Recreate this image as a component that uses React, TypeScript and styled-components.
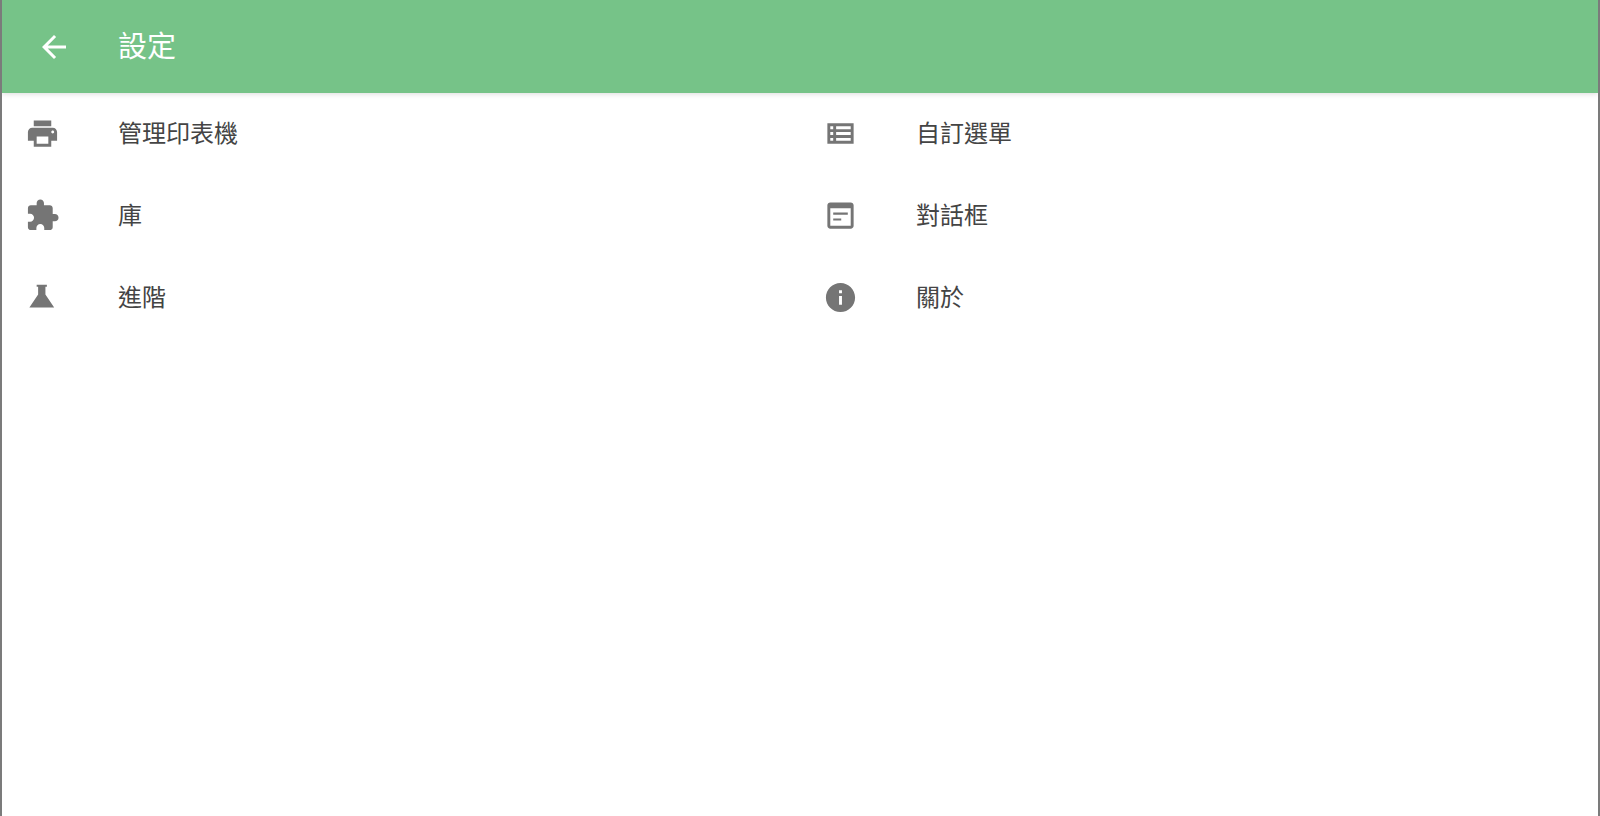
import styled, { createGlobalStyle } from "styled-components";

const GlobalStyle = createGlobalStyle`
  html, body {
    margin: 0;
    padding: 0;
    height: 100%;
    background: #ffffff;
  }
  #root {
    height: 100%;
  }
`;

const Screen = styled.div`
  box-sizing: border-box;
  width: 1600px;
  height: 816px;
  overflow: hidden;
  border-left: 2px solid #7b7b7b;
  border-right: 2px solid #7b7b7b;
  background: #ffffff;
  font-family: "Noto Sans CJK TC", "Noto Sans", sans-serif;
`;

const Toolbar = styled.header`
  display: flex;
  align-items: center;
  height: 93px;
  background: #76c388;
  box-shadow: 0 1px 5px rgba(0, 0, 0, 0.14);
  color: #ffffff;
`;

const BackIcon = styled.svg`
  width: 36px;
  height: 36px;
  margin-left: 34px;
  fill: #ffffff;
`;

const Title = styled.h1`
  margin: 0 0 4px 46px;
  font-size: 29px;
  font-weight: 400;
  line-height: 1;
`;

const Menu = styled.div`
  display: grid;
  grid-template-columns: 1fr 1fr;
  grid-auto-rows: 82px;
`;

const Row = styled.div`
  display: flex;
  align-items: center;
  padding-left: 23px;
`;

const RowIcon = styled.svg`
  flex: none;
  width: 35px;
  height: 35px;
  margin-bottom: 1px;
  fill: #757575;
`;

const Label = styled.span`
  margin: 0 0 4px 58px;
  font-size: 24px;
  line-height: 1;
  color: #444444;
`;

const items = [
  {
    label: "管理印表機",
    icon: "M19 8H5c-1.66 0-3 1.34-3 3v6h4v4h12v-4h4v-6c0-1.66-1.34-3-3-3zm-3 11H8v-5h8v5zm3-7c-.55 0-1-.45-1-1s.45-1 1-1 1 .45 1 1-.45 1-1 1zm-1-9H6v4h12V3z",
  },
  {
    label: "自訂選單",
    icon: "M3 5v14h18V5H3zm4 12H5v-2h2v2zm0-4H5v-2h2v2zm0-4H5V7h2v2zm12 8H9v-2h10v2zm0-4H9v-2h10v2zm0-4H9V7h10v2z",
  },
  {
    label: "庫",
    icon: "M20.5 11H19V7c0-1.1-.9-2-2-2h-4V3.5C13 2.12 11.88 1 10.5 1S8 2.12 8 3.5V5H4c-1.1 0-1.99.9-1.99 2v3.8H3.5c1.49 0 2.7 1.21 2.7 2.7s-1.21 2.7-2.7 2.7H2V20c0 1.1.9 2 2 2h3.8v-1.5c0-1.49 1.21-2.7 2.7-2.7 1.49 0 2.7 1.21 2.7 2.7V22H17c1.1 0 2-.9 2-2v-4h1.5c1.38 0 2.5-1.12 2.5-2.5S21.88 11 20.5 11z",
  },
  {
    label: "對話框",
    icon: "M19 3H5c-1.1 0-2 .9-2 2v14c0 1.1.9 2 2 2h14c1.1 0 2-.9 2-2V5c0-1.1-.9-2-2-2zm0 16H5V7h14v12zM7 10h10v1.5H7zm0 4h5.5v1.5H7z",
  },
  {
    label: "進階",
    icon: "M8 3.2h7v1.4h-1V10l6 8.8H3l6-8.8V4.6H8z",
  },
  {
    label: "關於",
    icon: "M12 2C6.48 2 2 6.48 2 12s4.48 10 10 10 10-4.48 10-10S17.52 2 12 2zm1 15h-2v-6h2v6zm0-8h-2V7h2v2z",
  },
];

export default function App() {
  return (
    <>
      <GlobalStyle />
      <Screen>
        <Toolbar>
          <BackIcon viewBox="0 0 24 24">
            <path d="M20 11H7.83l5.59-5.59L12 4l-8 8 8 8 1.41-1.41L7.83 13H20v-2z" />
          </BackIcon>
          <Title>設定</Title>
        </Toolbar>
        <Menu>
          {items.map((item) => (
            <Row key={item.label}>
              <RowIcon viewBox="0 0 24 24">
                <path d={item.icon} />
              </RowIcon>
              <Label>{item.label}</Label>
            </Row>
          ))}
        </Menu>
      </Screen>
    </>
  );
}
